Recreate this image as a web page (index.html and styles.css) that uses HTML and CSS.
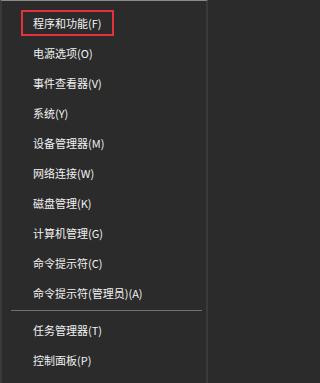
FILE: index.html
```html
<!DOCTYPE html>
<html lang="zh-CN">
<head>
<meta charset="utf-8">
<title>Menu</title>
<link rel="stylesheet" href="styles.css">
</head>
<body>
<div class="menu">
  <ul class="group">
    <li class="item selected"><span class="label">程序和功能(F)</span></li>
    <li class="item"><span class="label">电源选项(O)</span></li>
    <li class="item"><span class="label">事件查看器(V)</span></li>
    <li class="item"><span class="label">系统(Y)</span></li>
    <li class="item"><span class="label">设备管理器(M)</span></li>
    <li class="item"><span class="label">网络连接(W)</span></li>
    <li class="item"><span class="label">磁盘管理(K)</span></li>
    <li class="item"><span class="label">计算机管理(G)</span></li>
    <li class="item"><span class="label">命令提示符(C)</span></li>
    <li class="item"><span class="label">命令提示符(管理员)(A)</span></li>
  </ul>
  <div class="sep"></div>
  <ul class="group">
    <li class="item"><span class="label">任务管理器(T)</span></li>
    <li class="item"><span class="label">控制面板(P)</span></li>
    <li class="item"><span class="label">文件资源管理器(E)</span></li>
  </ul>
</div>
</body>
</html>
```
FILE: styles.css
```css
html, body {
  margin: 0;
  padding: 0;
  background: #2b2b2b;
  overflow: hidden;
}
.menu {
  width: 208px;
  height: 383px;
  box-sizing: border-box;
  background: #2b2b2b;
  border-top: 1px solid #8c8c8c;
  border-left: 2px solid #3a3a3a;
  border-right: 2px solid #3a3a3a;
  padding-top: 7px;
  overflow: hidden;
  font-family: "Noto Sans CJK SC", "Noto Sans", sans-serif;
  font-size: 11px;
  color: #f2f2f2;
}
.group {
  list-style: none;
  margin: 0;
  padding: 0;
}
.item {
  height: 30px;
  display: flex;
  align-items: center;
  padding-left: 31px;
}
.label {
  line-height: 14px;
  white-space: nowrap;
}
.selected .label {
  outline: 2px solid #e3323b;
  outline-offset: 0;
  padding: 4px 10px 4px 10px;
  margin-left: -10px;
}
.sep {
  height: 1px;
  background: #707070;
  margin: 2px 4px 4px 9px;
}
```
